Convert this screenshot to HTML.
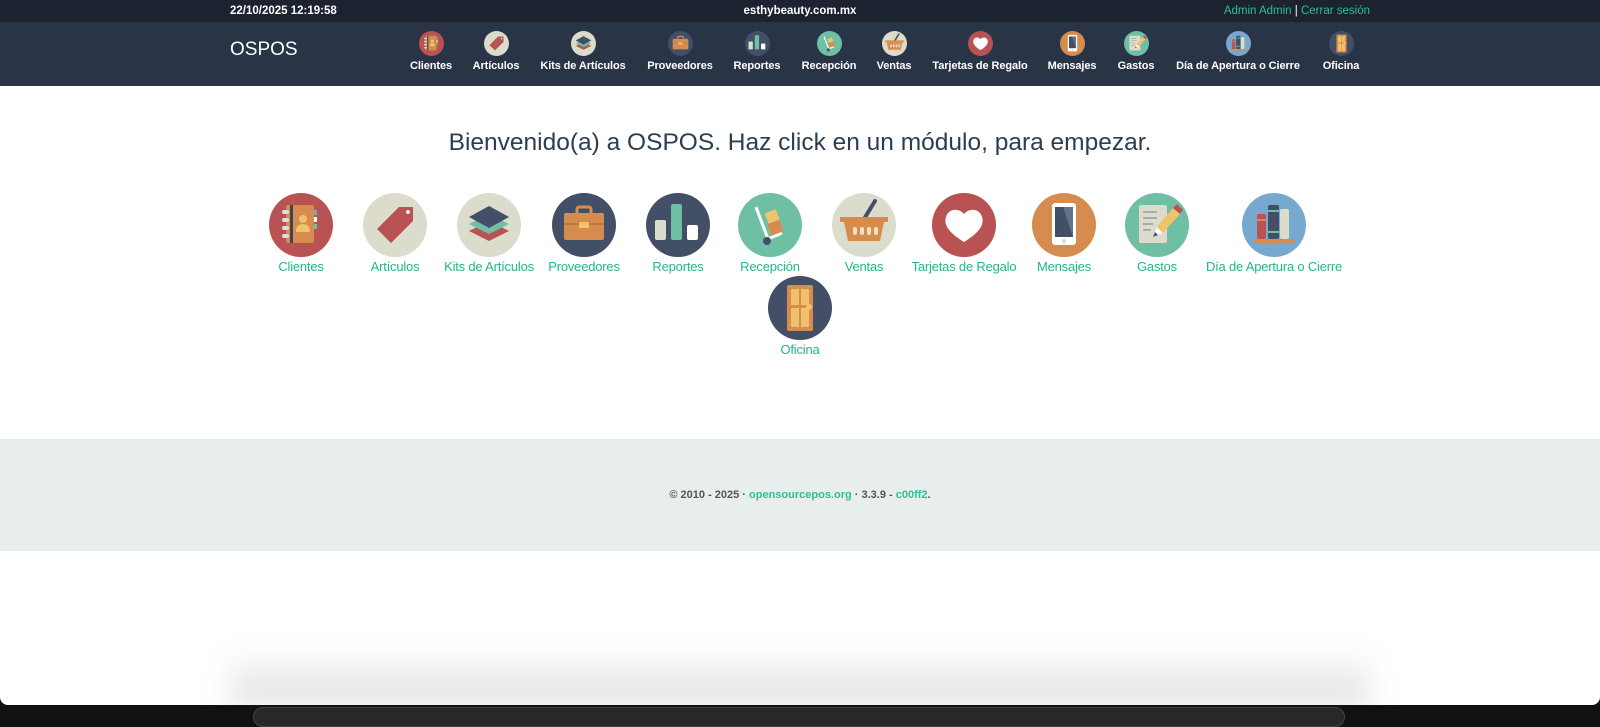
<!DOCTYPE html>
<html><head><meta charset="utf-8"><style>
*{margin:0;padding:0;box-sizing:border-box}
html,body{width:1600px;height:714px;overflow:hidden;background:#111;font-family:"Liberation Sans",sans-serif}
#page{position:absolute;left:0;top:0;width:1600px;height:705px;background:#fff;border-radius:0 0 8px 8px;overflow:hidden}
#top{position:absolute;left:0;top:0;width:1600px;height:22px;background:#1c2230;color:#fff;font-size:11.5px;font-weight:bold;line-height:22px}
#nav{position:absolute;left:0;top:22px;width:1600px;height:64px;background:#2a3447}
.g{color:#2fbf90}
.n{position:absolute;width:140px;margin-left:-70px;text-align:center;color:#fff;font-size:11px;font-weight:bold;top:9px;letter-spacing:-0.1px}
.n svg{width:25px;height:25px;display:block;margin:0 auto 4px}
.m{position:absolute;width:180px;margin-left:-90px;text-align:center;color:#22b68a;font-size:13px;letter-spacing:-0.2px}
.m svg{width:64px;height:64px;display:block;margin:0 auto 2px}
#foot{position:absolute;left:0;top:439px;width:1600px;height:112px;background:#e8eeee;text-align:center;font-size:11px;font-weight:bold;color:#555;line-height:112px}
#shade{position:absolute;left:230px;top:650px;width:1140px;height:55px;background:linear-gradient(#fff,#dcdcdc);filter:blur(14px)}
#tab{position:absolute;left:253px;top:707px;width:1092px;height:20px;background:#2a2826;border-radius:10px;border:1px solid #444}
</style></head><body>
<svg width="0" height="0" style="position:absolute">
<defs>
<symbol id="i1" viewBox="0 0 64 64"><circle cx="32" cy="32" r="32" fill="#b95252"/><rect x="17" y="12" width="28" height="38" rx="2" fill="#d68c4f"/><rect x="21" y="12" width="3" height="38" fill="#3b4558"/><g fill="#ddd"><rect x="13" y="17" width="7" height="4" rx="2"/><rect x="13" y="25" width="7" height="4" rx="2"/><rect x="13" y="33" width="7" height="4" rx="2"/><rect x="13" y="41" width="7" height="4" rx="2"/></g><rect x="45" y="17" width="3" height="5" fill="#6fa8d6"/><rect x="45" y="24" width="3" height="5" fill="#fff"/><rect x="45" y="31" width="3" height="5" fill="#6fbfa5"/><circle cx="34" cy="26" r="4" fill="#f0c26c"/><path d="M27 39q0-8 7-8t7 8z" fill="#f0c26c"/></symbol>
<symbol id="i2" viewBox="0 0 64 64"><circle cx="32" cy="32" r="32" fill="#dcdccd"/><path d="M14 36L36 14L50 14L50 28L28 50Z" fill="#b95252"/><circle cx="45" cy="19" r="2" fill="#eee"/></symbol>
<symbol id="i3" viewBox="0 0 64 64"><circle cx="32" cy="32" r="32" fill="#dcdccd"/><path d="M12 38L32 28L52 38L32 48Z" fill="#b95252"/><path d="M12 31L32 21L52 31L32 41Z" fill="#6fbfa5"/><path d="M12 24L32 13L52 24L32 35Z" fill="#434f66"/></symbol>
<symbol id="i4" viewBox="0 0 64 64"><circle cx="32" cy="32" r="32" fill="#434f66"/><rect x="25" y="14" width="14" height="8" rx="2" fill="none" stroke="#d68c4f" stroke-width="3"/><rect x="12" y="20" width="40" height="27" rx="2" fill="#d68c4f"/><rect x="12" y="30" width="40" height="2" fill="#c07a40"/><rect x="27" y="29" width="10" height="6" rx="1" fill="#f0c26c"/></symbol>
<symbol id="i5" viewBox="0 0 64 64"><circle cx="32" cy="32" r="32" fill="#434f66"/><rect x="9" y="27" width="11" height="20" rx="2" fill="#dcdccd"/><rect x="25" y="11" width="11" height="36" rx="2" fill="#6fbfa5"/><rect x="41" y="32" width="11" height="15" rx="2" fill="#fff"/></symbol>
<symbol id="i6" viewBox="0 0 64 64"><circle cx="32" cy="32" r="32" fill="#6fbfa5"/><path d="M18 14L30 46L44 40" fill="none" stroke="#fff" stroke-width="3"/><rect x="28" y="18" width="12" height="11" fill="#f0c26c" transform="rotate(-20 34 23)"/><rect x="31" y="29" width="13" height="12" fill="#d68c4f" transform="rotate(-20 37 35)"/><circle cx="29" cy="48" r="4" fill="#434f66"/></symbol>
<symbol id="i7" viewBox="0 0 64 64"><circle cx="32" cy="32" r="32" fill="#dcdccd"/><path d="M32 26L43 8" stroke="#434f66" stroke-width="4" stroke-linecap="round"/><rect x="8" y="24" width="48" height="5" fill="#d68c4f"/><path d="M12 29H52L48 48H16Z" fill="#d68c4f"/><g fill="#f3e1c0"><rect x="21" y="34" width="4" height="8" rx="2"/><rect x="28" y="34" width="4" height="8" rx="2"/><rect x="35" y="34" width="4" height="8" rx="2"/><rect x="42" y="34" width="4" height="8" rx="2"/></g></symbol>
<symbol id="i8" viewBox="0 0 64 64"><circle cx="32" cy="32" r="32" fill="#b95252"/><path d="M32 49C14 38 12 30 14 24C16 16 26 14 32 21C38 14 48 16 50 24C52 30 50 38 32 49Z" fill="#fff"/></symbol>
<symbol id="i9" viewBox="0 0 64 64"><circle cx="32" cy="32" r="32" fill="#d68c4f"/><rect x="20" y="10" width="24" height="42" rx="3" fill="#fff"/><rect x="23" y="14" width="18" height="30" fill="#434f66"/><path d="M31 14H41V44Z" fill="#65708a"/><circle cx="32" cy="48" r="2" fill="#dcdccd"/></symbol>
<symbol id="i10" viewBox="0 0 64 64"><circle cx="32" cy="32" r="32" fill="#6fbfa5"/><rect x="14" y="12" width="28" height="38" rx="2" fill="#dcdccd"/><g fill="#aaa"><rect x="18" y="18" width="14" height="2"/><rect x="18" y="24" width="14" height="2"/><rect x="18" y="30" width="10" height="2"/><rect x="18" y="36" width="8" height="2"/></g><path d="M28 44L32 34L48 15L55 21L38 40Z" fill="#f0c26c"/><path d="M48 15L52 11L58 17L55 21Z" fill="#b95252"/><path d="M28 44L32 34L38 40Z" fill="#fff"/><path d="M28 44L30 39L33 42Z" fill="#434f66"/></symbol>
<symbol id="i11" viewBox="0 0 64 64"><circle cx="32" cy="32" r="32" fill="#77a9d0"/><rect x="15" y="21" width="9" height="25" rx="2" fill="#b95252"/><rect x="15" y="26" width="9" height="2" fill="#d68c4f"/><rect x="26" y="12" width="11" height="34" rx="2" fill="#434f66"/><rect x="26" y="17" width="11" height="2" fill="#6fbfa5"/><rect x="26" y="38" width="11" height="2" fill="#6fbfa5"/><rect x="38" y="16" width="9" height="30" rx="2" fill="#dcdccd"/><rect x="12" y="46" width="40" height="4" fill="#d68c4f"/></symbol>
<symbol id="i12" viewBox="0 0 64 64"><circle cx="32" cy="32" r="32" fill="#434f66"/><rect x="19" y="9" width="26" height="46" rx="2" fill="#d68c4f"/><rect x="23" y="13" width="8" height="16" fill="#f0c26c"/><rect x="33" y="13" width="8" height="16" fill="#f0c26c"/><rect x="23" y="32" width="8" height="19" fill="#f0c26c"/><rect x="33" y="32" width="8" height="19" fill="#f0c26c"/><circle cx="41" cy="31" r="3" fill="#f0c26c"/></symbol>
</defs></svg>
<div id="page">
<div id="top"><span style="position:absolute;left:230px">22/10/2025 12:19:58</span><span style="position:absolute;left:0;width:1600px;text-align:center">esthybeauty.com.mx</span><span style="position:absolute;right:230px;font-weight:normal"><span class="g">Admin Admin</span> | <span class="g">Cerrar sesión</span></span></div>
<div id="nav"><div style="position:absolute;left:230px;top:17px;color:#fff;font-size:19px">OSPOS</div>
<div class="n" style="left:431px"><svg><use href="#i1"/></svg>Clientes</div>
<div class="n" style="left:496px"><svg><use href="#i2"/></svg>Artículos</div>
<div class="n" style="left:583px"><svg><use href="#i3"/></svg>Kits de Artículos</div>
<div class="n" style="left:680px"><svg><use href="#i4"/></svg>Proveedores</div>
<div class="n" style="left:757px"><svg><use href="#i5"/></svg>Reportes</div>
<div class="n" style="left:829px"><svg><use href="#i6"/></svg>Recepción</div>
<div class="n" style="left:894px"><svg><use href="#i7"/></svg>Ventas</div>
<div class="n" style="left:980px"><svg><use href="#i8"/></svg>Tarjetas de Regalo</div>
<div class="n" style="left:1072px"><svg><use href="#i9"/></svg>Mensajes</div>
<div class="n" style="left:1136px"><svg><use href="#i10"/></svg>Gastos</div>
<div class="n" style="left:1238px"><svg><use href="#i11"/></svg>Día de Apertura o Cierre</div>
<div class="n" style="left:1341px"><svg><use href="#i12"/></svg>Oficina</div>
</div>
<div style="position:absolute;top:129px;left:0;width:1600px;text-align:center;font-size:24.5px;color:#2c3e50">Bienvenido(a) a OSPOS. Haz click en un módulo, para empezar.</div>
<div class="m" style="left:301px;top:193px"><svg><use href="#i1"/></svg>Clientes</div>
<div class="m" style="left:395px;top:193px"><svg><use href="#i2"/></svg>Artículos</div>
<div class="m" style="left:489px;top:193px"><svg><use href="#i3"/></svg>Kits de Artículos</div>
<div class="m" style="left:584px;top:193px"><svg><use href="#i4"/></svg>Proveedores</div>
<div class="m" style="left:678px;top:193px"><svg><use href="#i5"/></svg>Reportes</div>
<div class="m" style="left:770px;top:193px"><svg><use href="#i6"/></svg>Recepción</div>
<div class="m" style="left:864px;top:193px"><svg><use href="#i7"/></svg>Ventas</div>
<div class="m" style="left:964px;top:193px"><svg><use href="#i8"/></svg>Tarjetas de Regalo</div>
<div class="m" style="left:1064px;top:193px"><svg><use href="#i9"/></svg>Mensajes</div>
<div class="m" style="left:1157px;top:193px"><svg><use href="#i10"/></svg>Gastos</div>
<div class="m" style="left:1274px;top:193px"><svg><use href="#i11"/></svg>Día de Apertura o Cierre</div>
<div class="m" style="left:800px;top:276px"><svg><use href="#i12"/></svg>Oficina</div>
<div id="foot">© 2010 - 2025 · <span class="g">opensourcepos.org</span> · 3.3.9 - <span class="g">c00ff2</span>.</div>
<div id="shade"></div>
</div>
<div id="tab"></div>
</body></html>
